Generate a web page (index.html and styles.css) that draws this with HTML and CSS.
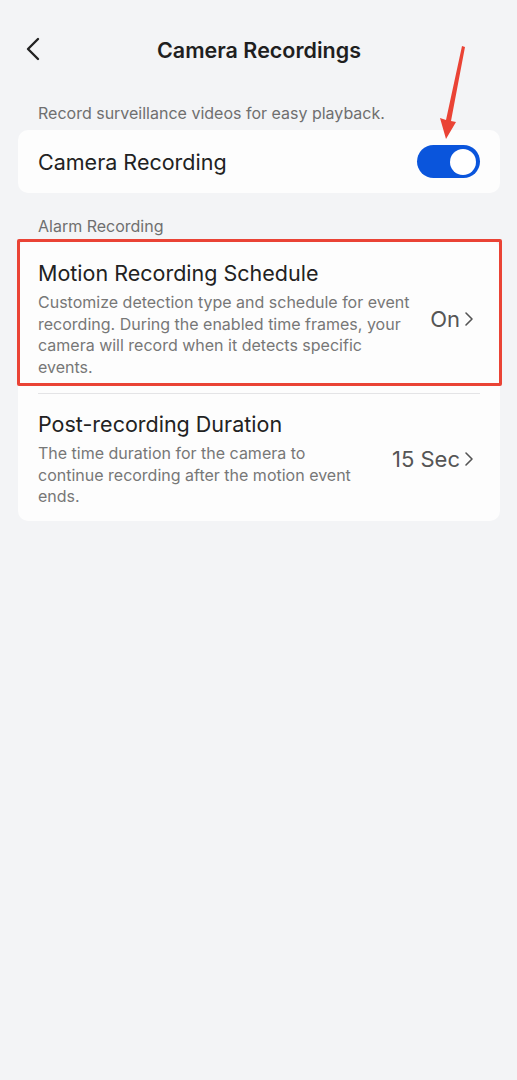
FILE: index.html
```html
<!DOCTYPE html>
<html lang="en">
<head>
    <meta charset="UTF-8">
    <meta name="viewport" content="width=device-width, initial-scale=1.0">
    <title>Camera Recordings</title>
    <link rel="stylesheet" href="styles.css">
</head>
<body>
    <div class="page">
        <header class="nav">
            <button class="back" aria-label="Back">
                <svg width="16" height="24" viewBox="0 0 16 24"><path d="M13 2 L3 12 L13 22" fill="none" stroke="#222" stroke-width="2.4" stroke-linecap="round" stroke-linejoin="round"/></svg>
            </button>
            <h1>Camera Recordings</h1>
        </header>

        <p class="section-label first">Record surveillance videos for easy playback.</p>
        <div class="card">
            <div class="row row-switch">
                <span class="row-title">Camera Recording</span>
                <span class="switch on"><span class="knob"></span></span>
            </div>
        </div>

        <p class="section-label">Alarm Recording</p>
        <div class="card">
            <div class="row highlighted">
                <div class="row-text">
                    <div class="row-title">Motion Recording Schedule</div>
                    <div class="row-desc">Customize detection type and schedule for event recording. During the enabled time frames, your camera will record when it detects specific events.</div>
                </div>
                <div class="row-value">On
                    <svg width="10" height="16" viewBox="0 0 10 16"><path d="M2 2 L8 8 L2 14" fill="none" stroke="#555" stroke-width="1.6" stroke-linecap="round" stroke-linejoin="round"/></svg>
                </div>
                <div class="mark-box"></div>
            </div>
            <div class="row">
                <div class="row-text">
                    <div class="row-title">Post-recording Duration</div>
                    <div class="row-desc">The time duration for the camera to continue recording after the motion event ends.</div>
                </div>
                <div class="row-value">15 Sec
                    <svg width="10" height="16" viewBox="0 0 10 16"><path d="M2 2 L8 8 L2 14" fill="none" stroke="#555" stroke-width="1.6" stroke-linecap="round" stroke-linejoin="round"/></svg>
                </div>
            </div>
        </div>

        <!-- annotation arrow pointing at the switch -->
        <svg class="mark-arrow" width="517" height="160" viewBox="0 0 517 160">
            <path d="M462 46 L465 47 L451 121 L456 122 L446 139 L440 118 L446 120 Z" fill="#ea4335"/>
        </svg>
    </div>
</body>
</html>
```

FILE: styles.css
```css
body {
    margin: 0;
    background-color: #f3f4f6;
    font-family: 'Inter', 'Noto Sans', sans-serif;
    color: #222;
}

.page {
    position: relative;
    width: 517px;
    min-height: 1080px;
    padding: 0 17px 0 18px;
    box-sizing: border-box;
}

.nav {
    position: relative;
    height: 104px;
    padding-top: 37px;
    box-sizing: border-box;
    text-align: center;
}

.nav .back {
    position: absolute;
    left: 7px;
    top: 37px;
    border: none;
    background: none;
    padding: 0;
    cursor: pointer;
}

.nav h1 {
    margin: 0;
    font-size: 21.5px;
    line-height: 26px;
    font-weight: 600;
    color: #1f1f1f;
}

.section-label {
    margin: 0;
    padding: 24px 20px 5px;
    font-size: 16px;
    line-height: 18px;
    color: #6f6f6f;
}

.section-label.first {
    padding: 0 20px 8px;
}

.card {
    background: #fdfdfd;
    border-radius: 10px;
}

.row {
    position: relative;
    display: flex;
    align-items: center;
    gap: 18px;
    padding: 20px 20px 14px;
}

.row + .row {
    border-top: 1px solid #e4e4e6;
    margin: 0 20px;
    padding: 17px 0 13px;
}

.row-switch {
    padding: 15px 20px;
    justify-content: space-between;
}

.row-text {
    flex: 1;
    min-width: 0;
}

.row-title {
    font-size: 21.5px;
    line-height: 26px;
    color: #222;
}

.row-desc {
    margin-top: 6px;
    max-width: 375px;
    font-size: 16px;
    line-height: 21.7px;
    color: #777;
}

.row-value {
    display: flex;
    align-items: center;
    gap: 4px;
    padding-right: 6px;
    font-size: 22px;
    color: #555;
    white-space: nowrap;
}

.switch {
    width: 63px;
    height: 33px;
    border-radius: 17px;
    background: #0a55dc;
    display: flex;
    align-items: center;
    justify-content: flex-end;
    padding: 0 4px;
    box-sizing: border-box;
}

.switch .knob {
    width: 26px;
    height: 26px;
    border-radius: 50%;
    background: #fff;
}

/* annotation overlays */
.mark-box {
    position: absolute;
    left: -1px;
    top: -1px;
    right: -2px;
    bottom: 7px;
    border: 3px solid #ea4335;
    border-radius: 2px;
    pointer-events: none;
}

.mark-arrow {
    position: absolute;
    left: 0;
    top: 0;
    pointer-events: none;
}
```
